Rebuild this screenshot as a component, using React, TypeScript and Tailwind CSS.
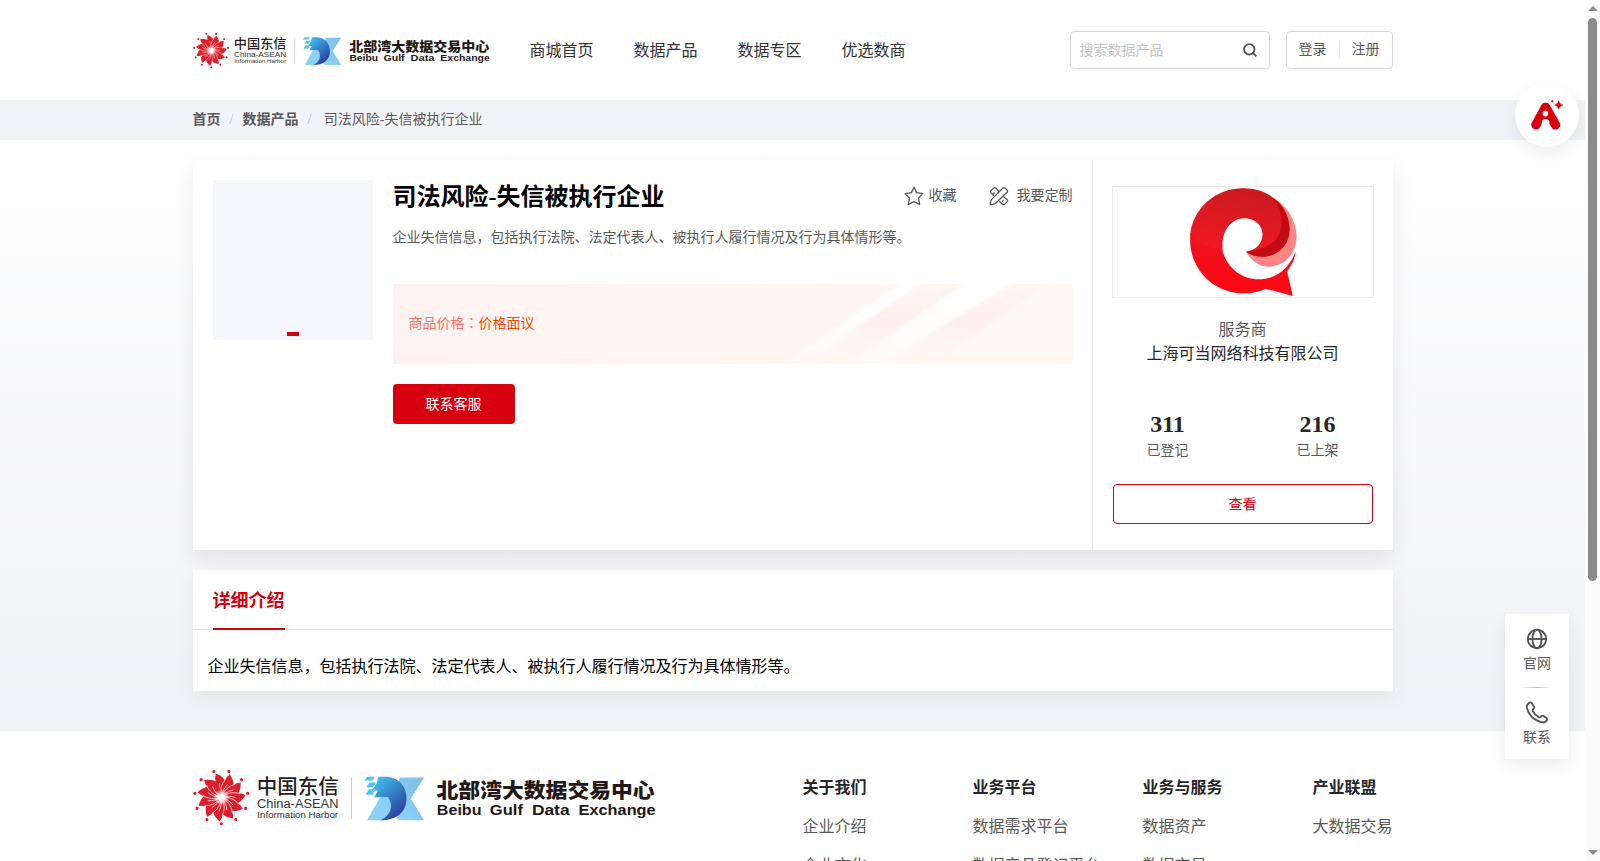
import type { ReactNode } from 'react';

const petals = Array.from({ length: 11 }, (_, i) => (i * 360) / 11);

function BrandLogo({ id, className }: { id: string; className: string }) {
  return (
    <svg viewBox="39 44 1388 170" className={className} fontFamily="'Liberation Sans','Noto Sans CJK SC',sans-serif">
      <defs>
        <linearGradient id={id + 'x'} x1="0" y1="1" x2="1" y2="0">
          <stop offset="0" stopColor="#8fd6f8" />
          <stop offset="1" stopColor="#7fbce6" />
        </linearGradient>
        <linearGradient id={id + 'd'} x1="0.1" y1="0" x2="0.8" y2="1">
          <stop offset="0" stopColor="#48c4f3" />
          <stop offset="0.45" stopColor="#3585cb" />
          <stop offset="1" stopColor="#2a3596" />
        </linearGradient>
        <radialGradient id={id + 'c'}>
          <stop offset="0" stopColor="#fff" />
          <stop offset="0.35" stopColor="#fff" stopOpacity="0.9" />
          <stop offset="1" stopColor="#fff" stopOpacity="0" />
        </radialGradient>
      </defs>
      <g transform="translate(124 128)">
        {petals.map((a) => (
          <g key={a} transform={`rotate(${a})`}>
            <path d="M0 0C-12 -12 -26 -38 -16 -71C-4 -66 12 -56 13 -42C13 -24 6 -10 0 0Z" fill="#dc1f2b" />
            <path d="M0 0C-14 -14 -22 -32 -18 -54M0 0C-6 -14 -8 -26 -5 -42" stroke="#fff" strokeWidth="2" fill="none" />
            <circle cx="0" cy="80" r="4.8" fill="#dc1f2b" />
          </g>
        ))}
        <circle r="24" fill={`url(#${id}c)`} />
      </g>
      <text x="230" y="119" fontSize="61" fontWeight="500" textLength="246" lengthAdjust="spacingAndGlyphs" fill="#231f20">中国东信</text>
      <text x="231" y="161" fontSize="36" textLength="244" lengthAdjust="spacingAndGlyphs" fill="#333">China-ASEAN</text>
      <text x="232" y="189" fontSize="26" textLength="242" lengthAdjust="spacingAndGlyphs" fill="#333">Information Harbor</text>
      <path d="M514 69V194" stroke="#c9c9c9" strokeWidth="3" />
      <path d="M660 69H732L692 133L732 197H655L630 150Z" fill={`url(#${id}x)`} />
      <path d="M561 197L600 128H625L650 160L610 197Z" fill="#8bd0f6" />
      <path d="M594 67H615C657 67 679 97 679 131C679 172 650 197 600 197C630 185 642 155 624 128H582L594 108H576L590 86Z" fill={`url(#${id}d)`} />
      <path d="M560 67H584L578 78H553ZM568 84H588L579 98H559ZM566 104H586L577 121H556Z" fill="#4cc6f7" />
      <text x="769" y="130" fontSize="60" fontWeight="900" textLength="654" lengthAdjust="spacingAndGlyphs" fill="#231815">北部湾大数据交易中心</text>
      <g fontSize="44" fontWeight="700" fill="#231815">
        <text x="770" y="180" textLength="134" lengthAdjust="spacingAndGlyphs">Beibu</text>
        <text x="929" y="180" textLength="99" lengthAdjust="spacingAndGlyphs">Gulf</text>
        <text x="1055" y="180" textLength="113" lengthAdjust="spacingAndGlyphs">Data</text>
        <text x="1195" y="180" textLength="231" lengthAdjust="spacingAndGlyphs">Exchange</text>
      </g>
    </svg>
  );
}

function SupplierLogo() {
  return (
    <svg viewBox="330 113 320 330" className="h-[110px] w-[107px]">
      <defs>
        <linearGradient id="qTop" x1="0.6" y1="0" x2="0.3" y2="1">
          <stop offset="0" stopColor="#c81b20" />
          <stop offset="1" stopColor="#f61722" />
        </linearGradient>
        <linearGradient id="qLow" x1="0" y1="0" x2="0" y2="1">
          <stop offset="0" stopColor="#ec131f" />
          <stop offset="1" stopColor="#ff0713" />
        </linearGradient>
      </defs>
      <path d="M440 124C540 95 649 165 649 262C649 315 610 352 565 352C535 352 512 333 498 307L600 280L600 180Z" fill="#ff8585" />
      <path d="M425 296C437 352 482 390 535 390C592 390 630 352 646 306C645 334 631 350 621 367L638 440L556 418C536 428 514 432 490 432C400 432 330 360 330 272V250C355 275 390 292 425 296Z" fill="url(#qLow)" />
      <path d="M330 258C337 178 405 117 490 117C575 117 628 180 628 240C628 288 592 322 548 322C528 322 512 317 498 307C530 303 547 280 547 255C547 228 524 207 492 207C455 207 427 243 427 285V303C390 297 355 282 330 258Z" fill="url(#qTop)" />
      <path d="M578 145C610 165 628 202 628 240C628 288 592 322 548 322C528 322 512 317 498 307C560 301 604 275 604 220C604 190 596 165 578 145Z" fill="#c40a12" />
    </svg>
  );
}

function PriceBackdrop() {
  return (
    <svg viewBox="-861 402 2040 240" preserveAspectRatio="none" className="absolute inset-0 h-full w-full">
      <defs>
        <linearGradient id="pWhite" x1="0" y1="0" x2="0" y2="1">
          <stop offset="0" stopColor="#fff" />
          <stop offset="0.5" stopColor="#fff" stopOpacity="0.8" />
          <stop offset="1" stopColor="#fff" stopOpacity="0.2" />
        </linearGradient>
        <linearGradient id="pPink" x1="0" y1="0" x2="0" y2="1">
          <stop offset="0" stopColor="#fff6f2" />
          <stop offset="0.5" stopColor="#ffefed" />
          <stop offset="1" stopColor="#fff4ef" stopOpacity="0" />
        </linearGradient>
        <filter id="pSoft">
          <feGaussianBlur stdDeviation="4" />
        </filter>
      </defs>
      <g filter="url(#pSoft)">
        <path d="M675 392H790L400 652H290Z" fill="url(#pWhite)" />
        <path d="M735 392H880L550 642H370Z" fill="url(#pPink)" />
        <path d="M865 392H1040L640 652H490Z" fill="url(#pWhite)" />
        <path d="M1010 392H1120L760 642H600Z" fill="url(#pPink)" />
      </g>
    </svg>
  );
}

const nav = ['商城首页', '数据产品', '数据专区', '优选数商'];

const columns = [
  { title: '关于我们', items: ['企业介绍', '企业文化'] },
  { title: '业务平台', items: ['数据需求平台', '数据产品登记平台'] },
  { title: '业务与服务', items: ['数据资产', '数据交易'] },
  { title: '产业联盟', items: ['大数据交易'] },
];

function Stat({ value, label }: { value: string; label: string }) {
  return (
    <div className="flex w-[110px] flex-col items-center">
      <span className="text-2xl leading-[30px] font-bold text-[#262626]">{value}</span>
      <span className="pt-px text-sm leading-[22px] text-[#595959]">{label}</span>
    </div>
  );
}

function FloatItem({ icon, label }: { icon: ReactNode; label: string }) {
  return (
    <div className="flex flex-col items-center text-[#595959]">
      {icon}
      <span className="mt-[3px] text-sm leading-[22px]">{label}</span>
    </div>
  );
}

export default function App() {
  return (
    <div className="relative h-[861px] w-[1600px] overflow-hidden bg-white font-['Liberation_Serif','Noto_Sans_CJK_SC',serif] text-black">
      <div className="w-[1585px]">
        <header className="flex h-[100px] justify-center">
          <div className="flex w-[1200px] items-center">
            <BrandLogo id="head" className="h-[37px] w-[297px]" />
            <nav className="ml-10 flex gap-10 pt-px text-base text-[#333]">
              {nav.map((n) => (
                <a key={n}>{n}</a>
              ))}
            </nav>
            <div className="ml-auto flex h-[38px] w-[200px] items-center justify-between rounded border border-[#d9d9d9] pr-3 pl-[9px] text-sm text-[#c4c4c4]">
              <span className="pt-0.5">搜索数据产品</span>
              <svg viewBox="0 0 14 14" className="h-[14px] w-[14px]" fill="none" stroke="#555" strokeWidth="1.9">
                <circle cx="6.3" cy="6.3" r="5.2" />
                <path d="M10 10L13.3 13.3" />
              </svg>
            </div>
            <div className="ml-4 flex h-[38px] w-[107px] items-center justify-center rounded border border-[#d9d9d9] text-sm text-[#595959]">
              <span>登录</span>
              <span className="mx-3 h-4 w-px bg-[#e8e8e8]" />
              <span>注册</span>
            </div>
          </div>
        </header>

        <div className="flex h-10 justify-center bg-[#f2f3f8]">
          <div className="flex w-[1200px] items-center text-sm text-[#595959]">
            <span className="font-bold">首页</span>
            <span className="mx-[9px] text-[#b4b8c0]">/</span>
            <span className="font-bold">数据产品</span>
            <span className="mx-[9px] text-[#b4b8c0]">/</span>
            <span className="ml-[3.5px]">司法风险-失信被执行企业</span>
          </div>
        </div>

        <main className="flex h-[591px] flex-col items-center gap-5 bg-linear-to-b from-white to-[#f1f2f7] pt-5">
          <section className="flex h-[390px] w-[1200px] bg-white shadow-[0_8px_20px_rgba(0,0,0,0.08)]">
            <div className="flex w-[900px] gap-5 border-r border-[#ececec] p-5 pr-[18px]">
              <div className="flex h-40 w-40 shrink-0 items-end justify-center bg-[#f5f7fc] pb-1">
                <span className="h-1 w-3 bg-[#d7000f]" />
              </div>
              <div className="w-[680px]">
                <div className="flex h-8 items-center">
                  <h1 className="pt-0.5 text-2xl leading-8 font-bold">司法风险-失信被执行企业</h1>
                  <div className="ml-auto flex items-center text-sm text-[#595959]">
                    <svg viewBox="0 0 20 20" className="mr-[5px] h-5 w-5" fill="none" stroke="#595959" strokeWidth="1.3" strokeLinejoin="round">
                      <path d="M10 1.2L12.6 6.6L18.8 7.6L14.6 12L15.6 18.4L10 15.6L4.4 18.4L5.4 12L1.2 7.600L7.4 6.6Z" />
                    </svg>
                    <span>收藏</span>
                    <svg viewBox="0 0 20 20" className="mr-2 ml-8 h-5 w-5" fill="none" stroke="#595959" strokeWidth="1.3" strokeLinejoin="round">
                      <path d="M14.2 1.8Q15.2 1.200 16 2L18.2 4.200Q19 5 18.3 6L6.6 17.300Q4 18.900 1.2 18.8Q1 16 2.4 13.6Z" />
                      <path d="M8.4 7.600L9.6 6.200Q10.200 5.500 9.500 4.800L6.8 2Q5.8 1.200 4.800 2L1.900 4.800Q1.100 5.700 1.900 6.700L5 9.800M3.900 8L5.600 6.400M14 10.200L18.300 13.700Q19 14.600 18.300 15.600L15.600 18.200Q14.400 19 13.400 18.200L10.300 15.200M13.200 15.600L14.600 14.200" />
                    </svg>
                    <span>我要定制</span>
                  </div>
                </div>
                <p className="mt-[15px] text-sm leading-[22px] text-[#595959]">企业失信信息，包括执行法院、法定代表人、被执行人履行情况及行为具体情形等。</p>
                <div className="relative mt-[35px] flex h-20 items-center bg-linear-to-r from-[#fff3f1] to-[#fff9f4] pl-4">
                  <PriceBackdrop />
                  <span className="relative text-sm text-[#ff6f61]">
                    商品价格<span className="font-['Noto_Sans_CJK_TC',sans-serif] leading-none">：</span>
                  </span>
                  <span className="relative text-sm text-[#ff4400]">价格面议</span>
                </div>
                <button className="mt-5 flex h-10 w-[122px] items-center justify-center rounded bg-[#d7000f] pt-0.5 text-sm text-white">联系客服</button>
              </div>
            </div>
            <aside className="flex w-[300px] flex-col items-center pt-[26px]">
              <div className="flex h-[112px] w-[262px] items-center justify-center border border-[#ececec] pl-px">
                <SupplierLogo />
              </div>
              <span className="mt-5 text-base leading-6 text-[#595959]">服务商</span>
              <span className="text-base leading-6 text-[#262626]">上海可当网络科技有限公司</span>
              <div className="mt-[43px] flex w-[260px] justify-between">
                <Stat value="311" label="已登记" />
                <Stat value="216" label="已上架" />
              </div>
              <button className="mt-[22px] flex h-10 w-[260px] items-center justify-center rounded border border-[#d7000f] pt-0.5 text-sm text-[#d7000f]">查看</button>
            </aside>
          </section>

          <section className="h-[121px] w-[1200px] bg-white shadow-[0_8px_20px_rgba(0,0,0,0.06)]">
            <div className="flex h-[60px] border-b border-[#e4e7ed] pl-5">
              <div className="-mb-px h-[60px] w-[72px] border-b-2 border-[#d7000f] text-lg leading-[62px] font-bold text-[#d7000f]">详细介绍</div>
            </div>
            <p className="pt-[25px] pl-[15px] text-base leading-6">企业失信信息，包括执行法院、法定代表人、被执行人履行情况及行为具体情形等。</p>
          </section>
        </main>

        <footer className="flex justify-center bg-white pt-[38px]">
          <div className="flex w-[1200px] justify-between">
            <BrandLogo id="foot" className="h-[57px] w-[463px]" />
            <div className="flex">
              {columns.map((c) => (
                <div key={c.title} className="flex w-[170px] flex-col gap-[15px] pt-[7px] text-base leading-6 whitespace-nowrap text-[#595959] last:w-20">
                  <span className="font-bold text-[#262626]">{c.title}</span>
                  {c.items.map((t) => (
                    <span key={t}>{t}</span>
                  ))}
                </div>
              ))}
            </div>
          </div>
        </footer>
      </div>

      <div className="absolute top-[83px] left-[1515px] flex h-16 w-16 items-center justify-center rounded-full bg-white shadow-[0_6px_16px_rgba(0,0,0,0.08)]">
        <svg viewBox="0 0 32 32" className="h-8 w-8">
          <path d="M14.600 8.4L5 25.800M14.600 8.4L24.500 25.800" stroke="#d7000f" strokeWidth="9.5" strokeLinecap="round" strokeLinejoin="round" fill="none" />
          <path d="M14.600 8L7 25H22Z" fill="#d7000f" />
          <circle cx="14.400" cy="14.6" r="2.8" fill="#fff" />
          <path d="M9 32V29Q11 26.500 10.900 23Q11.200 20 14.600 20Q18 20 18.300 23Q18.300 26.500 20.400 29V32Z" fill="#fff" />
          <path d="M27.700 1.800Q28.500 5.200 31.900 6Q28.500 6.800 27.700 10.200Q26.900 6.800 23.500 6Q26.900 5.200 27.700 1.800Z" fill="#d7000f" stroke="#d7000f" strokeWidth="0.5" />
          <path d="M21.300 0.500Q21.600 2 23.100 2.300Q21.600 2.600 21.300 4.100Q21 2.600 19.500 2.300Q21 2 21.300 0.500Z" fill="#d7000f" />
        </svg>
      </div>

      <div className="absolute top-[614px] left-[1505px] flex h-[145px] w-16 flex-col items-center bg-white pt-[14px] shadow-[0_6px_16px_rgba(0,0,0,0.08)]">
        <FloatItem
          label="官网"
          icon={
            <svg viewBox="0 0 22 22" className="h-[22px] w-[22px]" fill="none" stroke="#555" strokeWidth="1.9">
              <circle cx="11" cy="11" r="9.2" />
              <ellipse cx="11" cy="11" rx="4.6" ry="9.2" />
              <path d="M1.7 11H20.3" />
            </svg>
          }
        />
        <div className="my-3 h-px w-8 bg-linear-to-r from-transparent via-[#bbb] to-transparent" />
        <FloatItem
          label="联系"
          icon={
            <svg viewBox="0 0 24 24" className="h-6 w-6 pt-px" fill="none" stroke="#555" strokeWidth="1.9" strokeLinejoin="round">
              <path d="M3 2.5Q1 4 1.4 7Q2.4 12 7 17Q12 21.5 18 22.4Q21 22.4 22.6 19.5Q22.7 18.5 21.8 17.8L18.5 15.5Q17.5 15 16.8 15.8Q15.5 17.6 14 17Q9.5 14.5 7.6 10.5Q7 9 8.7 7.8Q9.6 7 9 6L6.5 2Q5.5 1 4.3 1.7Z" />
            </svg>
          }
        />
      </div>

      <div className="absolute top-0 right-0 flex h-full w-[15px] flex-col items-center justify-between bg-[#fcfcfc]">
        <svg viewBox="0 0 10 16" className="h-4 w-[10px]">
          <path d="M0 11L5 6L10 11Z" fill="#8b8b8b" />
        </svg>
        <div className="mb-auto h-[563px] w-[9px] translate-y-[2px] rounded-full bg-[#8b8b8b]" />
        <svg viewBox="0 0 10 16" className="h-4 w-[10px]">
          <path d="M0 5L5 10L10 5Z" fill="#8b8b8b" />
        </svg>
      </div>
    </div>
  );
}
